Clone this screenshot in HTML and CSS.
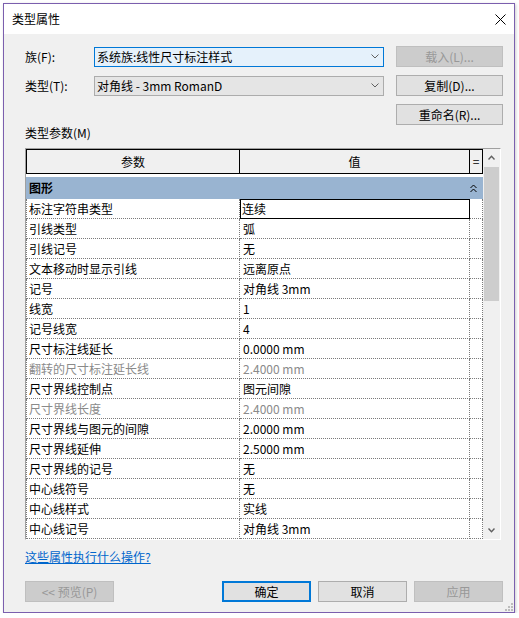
FILE: index.html
```html
<!DOCTYPE html>
<html lang="zh-CN">
  <head>
    <meta charset="UTF-8" />
    <meta name="viewport" content="width=device-width, initial-scale=1.0" />
    <title>类型属性</title>
    <link rel="stylesheet" href="styles.css">
  </head>
  <body>
    <div class="dialog">
      <div class="titlebar">
        <span class="title">类型属性</span>
        <svg class="close" width="11" height="11" viewBox="0 0 11 11">
          <path d="M0.5 0.5L10.5 10.5M10.5 0.5L0.5 10.5" stroke="#000" stroke-width="1" fill="none" />
        </svg>
      </div>

      <div class="content">
        <div class="form">
          <label>族(F):</label>
          <div class="combo focused">
            <span>系统族:线性尺寸标注样式</span>
            <svg width="8" height="5" viewBox="0 0 8 5"><path d="M0.5 0.5L4 4L7.5 0.5" stroke="#606060" fill="none" /></svg>
          </div>
          <button class="btn" disabled>载入(L)...</button>

          <label>类型(T):</label>
          <div class="combo">
            <span>对角线 - 3mm RomanD</span>
            <svg width="8" height="5" viewBox="0 0 8 5"><path d="M0.5 0.5L4 4L7.5 0.5" stroke="#606060" fill="none" /></svg>
          </div>
          <button class="btn">复制(D)...</button>

          <button class="btn rename">重命名(R)...</button>
        </div>

        <div class="section-label">类型参数(M)</div>

        <div class="grid-box">
          <div class="ptable">
            <div class="head">参数</div>
            <div class="head">值</div>
            <div class="head eq">=</div>
            <div class="head-gap"></div>

            <div class="group">
              <span>图形</span>
              <svg width="7" height="9" viewBox="0 0 7 9"><path d="M0.5 4L3.5 1L6.5 4M0.5 8L3.5 5L6.5 8" stroke="#000" fill="none" /></svg>
            </div>

            <div class="cell">标注字符串类型</div><div class="cell editing">连续</div><div class="cell"></div>
            <div class="cell">引线类型</div><div class="cell">弧</div><div class="cell"></div>
            <div class="cell">引线记号</div><div class="cell">无</div><div class="cell"></div>
            <div class="cell">文本移动时显示引线</div><div class="cell">远离原点</div><div class="cell"></div>
            <div class="cell">记号</div><div class="cell">对角线 3mm</div><div class="cell"></div>
            <div class="cell">线宽</div><div class="cell">1</div><div class="cell"></div>
            <div class="cell">记号线宽</div><div class="cell">4</div><div class="cell"></div>
            <div class="cell">尺寸标注线延长</div><div class="cell">0.0000 mm</div><div class="cell"></div>
            <div class="cell muted">翻转的尺寸标注延长线</div><div class="cell muted">2.4000 mm</div><div class="cell"></div>
            <div class="cell">尺寸界线控制点</div><div class="cell">图元间隙</div><div class="cell"></div>
            <div class="cell muted">尺寸界线长度</div><div class="cell muted">2.4000 mm</div><div class="cell"></div>
            <div class="cell">尺寸界线与图元的间隙</div><div class="cell">2.0000 mm</div><div class="cell"></div>
            <div class="cell">尺寸界线延伸</div><div class="cell">2.5000 mm</div><div class="cell"></div>
            <div class="cell">尺寸界线的记号</div><div class="cell">无</div><div class="cell"></div>
            <div class="cell">中心线符号</div><div class="cell">无</div><div class="cell"></div>
            <div class="cell">中心线样式</div><div class="cell">实线</div><div class="cell"></div>
            <div class="cell">中心线记号</div><div class="cell">对角线 3mm</div><div class="cell"></div>
          </div>

          <div class="scrollbar">
            <div class="arrow">
              <svg width="7" height="5" viewBox="0 0 7 5"><path d="M0.5 4.5L3.5 1.2L6.5 4.5" stroke="#606060" stroke-width="1.4" fill="none" /></svg>
            </div>
            <div class="thumb"></div>
            <div class="arrow bottom">
              <svg width="7" height="5" viewBox="0 0 7 5"><path d="M0.5 0.5L3.5 3.8L6.5 0.5" stroke="#606060" stroke-width="1.4" fill="none" /></svg>
            </div>
          </div>
        </div>

        <a class="help-link" href="#">这些属性执行什么操作?</a>

        <div class="footer">
          <button class="btn wide preview" disabled>&lt;&lt; 预览(P)</button>
          <button class="btn wide default">确定</button>
          <button class="btn wide">取消</button>
          <button class="btn wide" disabled>应用</button>
        </div>
      </div>

      <svg class="grip" width="8" height="8" viewBox="0 0 8 8">
        <rect x="6" y="0" width="2" height="2" fill="#bcbcbc" />
        <rect x="3" y="3" width="2" height="2" fill="#bcbcbc" />
        <rect x="6" y="3" width="2" height="2" fill="#bcbcbc" />
        <rect x="0" y="6" width="2" height="2" fill="#bcbcbc" />
        <rect x="3" y="6" width="2" height="2" fill="#bcbcbc" />
        <rect x="6" y="6" width="2" height="2" fill="#bcbcbc" />
      </svg>
    </div>
  </body>
</html>
```

FILE: styles.css
```css
body {
  margin: 0;
  background-color: #ffffff;
  font-family: "Noto Sans CJK SC", sans-serif;
  font-size: 12px;
  color: #000000;
}

.dialog {
  position: relative;
  box-sizing: border-box;
  width: 512px;
  height: 610px;
  margin: 3px 0 0 3px;
  border: 1px solid #7b5fae;
  background-color: #f0f0f0;
  box-shadow: 1px 1px 3px rgba(0, 0, 0, 0.2);
}

.titlebar {
  height: 30px;
  background-color: #ffffff;
  display: flex;
  align-items: center;
  justify-content: space-between;
  padding: 0 8px;
}

.title {
  line-height: 16px;
}

.content {
  padding: 12px 11px 0 21px;
}

/* top form: family / type */
.form {
  display: grid;
  grid-template-columns: 69px 290px 1fr;
  align-items: center;
  row-gap: 8px;
}

.form label {
  line-height: 16px;
}

.combo {
  box-sizing: border-box;
  height: 20px;
  display: flex;
  align-items: center;
  justify-content: space-between;
  padding: 0 4px 0 2px;
  border: 1px solid #acacac;
  background-color: #e5e5e5;
  line-height: 16px;
}

.combo.focused {
  border-color: #0078d7;
  background-color: #e5f1fb;
}

.btn {
  box-sizing: border-box;
  height: 21px;
  padding: 0;
  border: 1px solid #adadad;
  background-color: #e1e1e1;
  font-family: "Noto Sans CJK SC", sans-serif;
  font-size: 12px;
  line-height: 16px;
  color: #000000;
}

.form .btn {
  width: 107px;
  justify-self: end;
}

.btn:disabled {
  background-color: #cccccc;
  border-color: #bfbfbf;
  color: #989898;
}

.rename {
  grid-column: 3;
}

.section-label {
  line-height: 16px;
  margin: 0 0 7px;
}

/* property grid */
.grid-box {
  box-sizing: border-box;
  width: 476px;
  height: 392px;
  display: flex;
  border: 1px solid;
  border-color: #a0a0a0 #ffffff #ffffff #a0a0a0;
  background-color: #ffffff;
}

.ptable {
  display: grid;
  grid-template-columns: 214px 230px 13px;
  grid-template-rows: 25px 3px 22px;
  grid-auto-rows: 20px;
  align-content: start;
}

.head {
  box-sizing: border-box;
  border-top: 1px solid #000000;
  border-bottom: 1px solid #000000;
  border-right: 1px solid #000000;
  background-color: #f0f0f0;
  text-align: center;
  line-height: 23px;
}

.head:first-child {
  border-left: 1px solid #000000;
}

.head.eq {
  line-height: 21px;
}

.head-gap {
  grid-column: 1 / -1;
}

.group {
  grid-column: 1 / -1;
  display: flex;
  align-items: center;
  justify-content: space-between;
  padding: 0 6px 0 3px;
  background-color: #99b4d1;
  font-weight: bold;
  line-height: 16px;
}

.cell {
  box-sizing: border-box;
  padding: 0 3px;
  border-right: 1px dotted #7a7a7a;
  border-bottom: 1px dotted #7a7a7a;
  line-height: 19px;
  white-space: nowrap;
}

.cell:nth-child(3n + 6) {
  border-left: 1px dotted #7a7a7a;
  padding-left: 2px;
}

.cell.editing {
  outline: 1px solid #000000;
  outline-offset: -1px;
  padding-left: 2px;
}

.cell.muted {
  color: #8a8a8a;
}

/* scrollbar on the right of the grid */
.scrollbar {
  width: 17px;
  display: flex;
  flex-direction: column;
  background-color: #f0f0f0;
}

.arrow {
  height: 17px;
  display: flex;
  align-items: center;
  justify-content: center;
}

.arrow.bottom {
  margin-top: auto;
}

.thumb {
  height: 134px;
  margin: 1px 1px 0;
  background-color: #cdcdcd;
}

.help-link {
  display: block;
  width: fit-content;
  margin-top: 10px;
  line-height: 14px;
  color: #0066cc;
  text-decoration: underline;
}

.footer {
  display: flex;
  gap: 7px;
  margin-top: 17px;
}

.btn.wide {
  width: 89px;
}

.btn.preview {
  margin-right: auto;
}

.btn.default {
  border: 2px solid #0078d7;
}

.grip {
  position: absolute;
  right: 1px;
  bottom: 1px;
}
```
